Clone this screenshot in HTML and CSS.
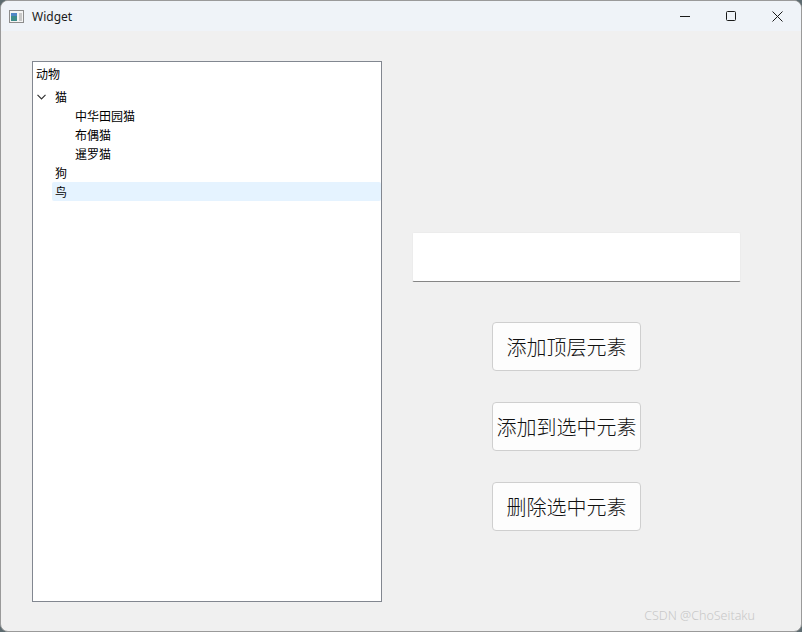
FILE: index.html
```html
<!DOCTYPE html>
<html lang="zh">
<head>
    <meta charset="UTF-8">
    <title>Widget</title>
    <link rel="stylesheet" href="styles.css">
</head>
<body>
    <div class="window">
        <div class="titlebar">
            <svg class="app-icon" width="15" height="13" viewBox="0 0 15 13">
                <rect x="0.5" y="0.5" width="14" height="12" fill="#f4f4f4" stroke="#8c8c8c"/>
                <rect x="2" y="3" width="6" height="8" fill="#3d8c8a"/>
                <rect x="2" y="3" width="6" height="3" fill="#4f86c6"/>
                <rect x="10" y="3" width="3" height="8" fill="#c8c8c8"/>
            </svg>
            <span class="title">Widget</span>
            <div class="controls">
                <svg width="46" height="30" viewBox="0 0 46 30"><line x1="18" y1="15.5" x2="28" y2="15.5" stroke="#1a1a1a"/></svg>
                <svg width="46" height="30" viewBox="0 0 46 30"><rect x="18.5" y="10.5" width="9" height="9" rx="1" fill="none" stroke="#1a1a1a"/></svg>
                <svg width="46" height="30" viewBox="0 0 46 30"><path d="M18.5 10.5 L28.5 20.5 M28.5 10.5 L18.5 20.5" stroke="#1a1a1a"/></svg>
            </div>
        </div>

        <div class="content">
            <div class="tree">
                <div class="tree-header">动物</div>
                <div class="tree-row level-0">
                    <svg class="chevron" width="9" height="6" viewBox="0 0 9 6"><path d="M0.5 0.8 L4.5 4.8 L8.5 0.8" fill="none" stroke="#333" stroke-width="1.2"/></svg>
                    <span>猫</span>
                </div>
                <div class="tree-row level-1"><span>中华田园猫</span></div>
                <div class="tree-row level-1"><span>布偶猫</span></div>
                <div class="tree-row level-1"><span>暹罗猫</span></div>
                <div class="tree-row level-0"><span>狗</span></div>
                <div class="tree-row level-0 selected"><span>鸟</span></div>
            </div>

            <div class="side">
                <div class="line-edit"></div>
                <button class="action-btn">添加顶层元素</button>
                <button class="action-btn">添加到选中元素</button>
                <button class="action-btn">删除选中元素</button>
            </div>
        </div>

        <div class="watermark">CSDN @ChoSeitaku</div>
    </div>
</body>
</html>
```

FILE: styles.css
```css
html {
    background-color: #5d6b70;
}

body {
    margin: 0;
    font-family: "Noto Sans", "Noto Sans CJK SC", sans-serif;
    color: #000;
}

.window {
    position: relative;
    box-sizing: border-box;
    width: 802px;
    height: 632px;
    background-color: #f0f0f0;
    border: 1px solid #9a9a9a;
    border-radius: 8px;
    overflow: hidden;
}

.titlebar {
    display: flex;
    align-items: center;
    height: 30px;
    background-color: #eff3f8;
}

.app-icon {
    margin-left: 8px;
    margin-top: 1px;
}

.title {
    margin-left: 8px;
    font-size: 12px;
    color: #1a1a1a;
}

.controls {
    display: flex;
    margin-left: auto;
    margin-right: 1px;
}

.controls svg {
    display: block;
}

.content {
    display: flex;
    align-items: flex-start;
    padding: 30px 0 0 31px;
}

.tree {
    box-sizing: border-box;
    width: 350px;
    height: 541px;
    background-color: #fff;
    border: 1px solid #828790;
    font-family: "Noto Sans CJK SC", sans-serif;
    font-size: 12px;
}

.tree-header {
    height: 25px;
    line-height: 24px;
    padding-left: 3px;
}

.tree-row {
    position: relative;
    height: 19px;
    line-height: 19px;
    box-sizing: border-box;
    padding-left: 3px;
}

.tree-row.level-0 {
    margin-left: 19px;
}

.tree-row.level-1 {
    margin-left: 39px;
}

.tree-row.selected {
    background-color: #e5f3ff;
    border-radius: 2px;
}

.chevron {
    position: absolute;
    left: -15px;
    top: 7px;
}

.side {
    display: flex;
    flex-direction: column;
    align-items: flex-start;
    margin-left: 30px;
    padding-top: 171px;
}

.line-edit {
    box-sizing: border-box;
    width: 329px;
    height: 50px;
    background-color: #fff;
    border: 1px solid #ececec;
    border-bottom: 1px solid #868686;
    border-radius: 2px;
}

.action-btn {
    box-sizing: border-box;
    width: 149px;
    height: 49px;
    margin-left: 80px;
    margin-top: 31px;
    padding: 0;
    background-color: #fdfdfd;
    border: 1px solid #cfcfcf;
    border-radius: 4px;
    font-family: "Noto Sans CJK SC", serif;
    font-size: 20px;
    font-weight: 300;
    color: #111;
}

.action-btn:first-of-type {
    margin-top: 40px;
}

.watermark {
    position: absolute;
    right: 46px;
    bottom: 7px;
    font-family: "Noto Sans", sans-serif;
    font-size: 12.5px;
    font-weight: 300;
    color: #c8c8c8;
}
```
